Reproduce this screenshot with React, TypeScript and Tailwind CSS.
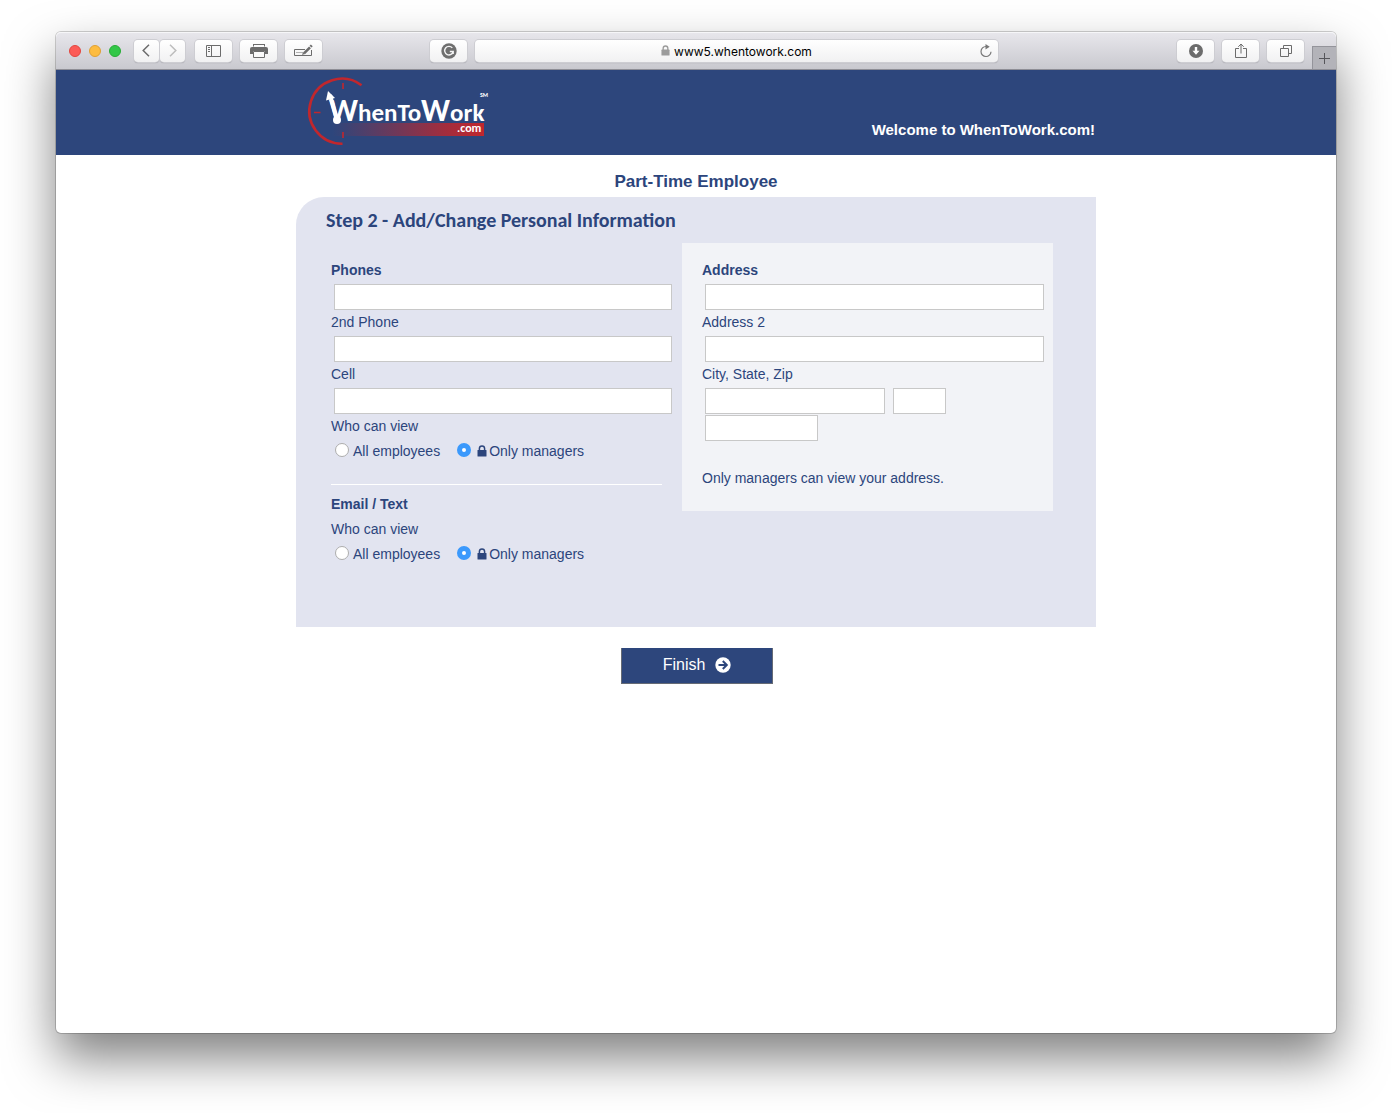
import type { ReactNode } from "react";

function ToolbarButton({ label, children, className = "w-[37px]" }: { label: string; children: ReactNode; className?: string }) {
  return (
    <button
      type="button"
      aria-label={label}
      className={`flex h-[22px] shrink-0 items-center justify-center rounded bg-linear-to-b from-white to-[#f1f1f2] text-[#6c6c6c] shadow-[0_0_0_1px_#cdcdd2,0_1px_1px_#8d8d93] ${className}`}
    >
      {children}
    </button>
  );
}

function LockIcon({ className }: { className: string }) {
  return (
    <svg viewBox="0 0 10 12" className={className} aria-hidden="true">
      <path d="M2.4 5.5V3.6a2.6 2.6 0 0 1 5.2 0v1.9" fill="none" stroke="currentColor" strokeWidth="1.5" />
      <rect x="0.5" y="5" width="9" height="6.5" rx="0.6" fill="currentColor" />
    </svg>
  );
}

function BrowserToolbar() {
  return (
    <div className="flex h-[38px] items-stretch rounded-t-[5px] border-b border-[#8e8e96] bg-linear-to-b from-[#e8e7ec] to-[#c9c9cf] shadow-[inset_0_1px_0_#f6f6f8]">
      <div className="flex min-w-0 flex-1 items-center pl-[13px]">
        <div className="flex shrink-0 gap-2">
          <span className="size-3 rounded-full border border-[#e2463f] bg-[#fc5b57]" />
          <span className="size-3 rounded-full border border-[#e0a033] bg-[#fdbc40]" />
          <span className="size-3 rounded-full border border-[#27ac35] bg-[#33c748]" />
        </div>
        <div className="ml-[13px] flex shrink-0 gap-px">
          <ToolbarButton label="Back" className="w-[25px] pr-0.5">
            <svg width="8" height="13" viewBox="0 0 8 13" fill="none" stroke="#6c6c6c" strokeWidth="1.5">
              <path d="M7 0.8 1.2 6.5 7 12.2" />
            </svg>
          </ToolbarButton>
          <ToolbarButton label="Forward" className="w-[25px]">
            <svg width="8" height="13" viewBox="0 0 8 13" fill="none" stroke="#bdbdbd" strokeWidth="1.5">
              <path d="m1 0.8 5.8 5.7L1 12.2" />
            </svg>
          </ToolbarButton>
        </div>
        <div className="ml-[10px] flex shrink-0 gap-2">
          <ToolbarButton label="Show sidebar">
            <svg width="15" height="12" viewBox="0 0 15 12" fill="none" stroke="currentColor">
              <path d="M0.5 0.5h14v11H.5zM5.5 1v10M2 2.5h2M2 4.5h2M2 6.5h2" />
            </svg>
          </ToolbarButton>
          <ToolbarButton label="Print">
            <svg width="18" height="14" viewBox="0 0 18 14">
              <path d="M3 0h12v2.500h-1V1H4v1.500H3z" fill="currentColor" />
              <path d="M2 3h14a2 2 0 0 1 2 2v5h-3V7H3v3H0V5a2 2 0 0 1 2-2z" fill="currentColor" />
              <path d="M3.500 7.500h11v6h-11z" fill="#fafafa" stroke="currentColor" />
            </svg>
          </ToolbarButton>
          <ToolbarButton label="Autofill">
            <svg width="19" height="13" viewBox="0 0 19 13" fill="none" stroke="currentColor">
              <path d="M11 5.500H.5v6h17V6" />
              <path d="M2.500 8.500H9" strokeDasharray="1 1" />
              <path d="m10 9.300 6-6" strokeWidth="2.600" />
              <path d="m16.500 2.700 1.300-1.300" strokeWidth="2.600" />
              <path d="m8 11 1-2.800 1.800 1.800z" fill="currentColor" stroke="none" />
            </svg>
          </ToolbarButton>
        </div>
        <div className="flex-1" />
      </div>
      <div className="flex w-[568px] min-w-0 items-center gap-2">
        <ToolbarButton label="Grammar check">
          <svg width="16" height="16" viewBox="0 0 16 16">
            <circle cx="8" cy="8" r="7.700" fill="#6f6f6f" />
            <path d="M11.300 4.900A4.300 4.300 0 1 0 12.200 8.500H8.800M12.200 8.300V11" fill="none" stroke="#f4f4f4" strokeWidth="1.400" />
          </svg>
        </ToolbarButton>
        <div className="flex h-[22px] min-w-0 flex-1 items-center rounded bg-linear-to-b from-white to-[#f1f1f2] pr-[6px] pl-[18px] shadow-[0_0_0_1px_#cdcdd2,0_1px_1px_#8d8d93]">
          <div className="flex flex-1 items-center justify-center gap-1 text-[12px] text-black">
            <LockIcon className="h-[11px] w-[9px] text-[#9b9b9b]" />
            <span className="pt-0.5 font-['Inter',sans-serif]">www5.whentowork.com</span>
          </div>
          <button type="button" aria-label="Reload">
            <svg width="12" height="14" viewBox="0 0 12 14">
              <path d="M6 2.500a5 5 0 1 0 5 5.200" fill="none" stroke="#777" strokeWidth="1.200" />
              <path d="M5.500 0 9.700 2.700 5.500 5.500z" fill="#777" />
            </svg>
          </button>
        </div>
      </div>
      <div className="flex min-w-0 flex-[0_1_338px] items-center justify-end">
        <div className="flex gap-2">
          <ToolbarButton label="Downloads">
            <svg width="14" height="14" viewBox="0 0 14 14">
              <circle cx="7" cy="7" r="7" fill="#6c6c6c" />
              <path d="M5.800 3h2.400v3.700h2.300L7 10.700 3.500 6.700h2.300z" fill="#fff" />
            </svg>
          </ToolbarButton>
          <ToolbarButton label="Share">
            <svg width="12" height="16" viewBox="0 0 12 16" fill="none" stroke="currentColor">
              <path d="M4 5.500H.5v9h11v-9H8M6 10.500V1M3.300 3.800 6 1l2.700 2.800" />
            </svg>
          </ToolbarButton>
          <ToolbarButton label="Show tabs">
            <svg width="12" height="12" viewBox="0 0 12 12" fill="none" stroke="currentColor">
              <path d="M.5 3.500h8v8h-8zM3.500 3V.5h8v8H9" />
            </svg>
          </ToolbarButton>
        </div>
        <button type="button" aria-label="New tab" className="ml-2 flex h-[23px] w-6 shrink-0 items-center justify-center self-end border-t border-l border-[#94949b] bg-[#b3b3b9] text-[#55555a]">
          <svg width="11" height="11" viewBox="0 0 11 11" stroke="currentColor">
            <path d="M5.500 0v11M0 5.500h11" />
          </svg>
        </button>
      </div>
    </div>
  );
}

function Logo() {
  return (
    <svg width="200" height="85" viewBox="0 0 200 85" role="img" aria-label="WhenToWork.com" className="shrink-0">
      <defs>
        <linearGradient id="bar" x1="0" x2="1">
          <stop offset="0" stopColor="#b02a36" stopOpacity="0" />
          <stop offset="0.75" stopColor="#b02a36" stopOpacity="0.9" />
          <stop offset="1" stopColor="#c1272d" />
        </linearGradient>
      </defs>
      <rect x="36" y="53" width="152" height="13" fill="url(#bar)" />
      <path d="M65.500 15.300A32.500 32.500 0 1 0 46.500 73.700" fill="none" stroke="#c1272d" strokeWidth="2.600" />
      <path d="M47 13v6M18 42.500h6.500M47 62v6" stroke="#c1272d" strokeWidth="1.600" />
      <g fill="#fff" fontFamily="Carlito, Lato, sans-serif" fontWeight="700">
        <text x="33" y="51" fontSize="25">
          <tspan fontSize="32">W</tspan>hen<tspan>To</tspan>
          <tspan fontSize="32">W</tspan>ork
        </text>
        <text x="161" y="62" fontSize="12">.com</text>
        <text x="184" y="27" fontSize="6">SM</text>
      </g>
      <path d="M41 50 34 25" stroke="#fff" strokeWidth="4" />
      <path d="M32 21 39 28 30 30.500z" fill="#fff" />
      <circle cx="41" cy="50" r="4" fill="#fff" />
    </svg>
  );
}

function Field({ id, label, bold = false }: { id: string; label: string; bold?: boolean }) {
  return (
    <div>
      <label htmlFor={id} className={`block h-[26px] leading-6 ${bold ? "font-bold" : ""}`}>
        {label}
      </label>
      <input id={id} type="text" className="ml-[3px] block h-[26px] w-[calc(100%-3px)] border border-[#c8c8c8] bg-white px-1" />
    </div>
  );
}

function Radio({ name, value, defaultChecked = false, children }: { name: string; value: string; defaultChecked?: boolean; children: ReactNode }) {
  return (
    <label className="flex items-center">
      <input
        type="radio"
        name={name}
        value={value}
        defaultChecked={defaultChecked}
        className="mb-0.5 size-[14px] appearance-none rounded-full border border-[#adadad] bg-white checked:border-[5px] checked:border-[#3b99fc]"
      />
      {children}
    </label>
  );
}

function Visibility({ name }: { name: string }) {
  return (
    <fieldset>
      <legend className="block leading-6">Who can view</legend>
      <div className="flex h-[26px] items-center gap-[17px] pl-1">
        <Radio name={name} value="all">
          <span className="ml-1">All employees</span>
        </Radio>
        <Radio name={name} value="managers" defaultChecked>
          <LockIcon className="mr-0.5 ml-1.5 h-3 w-2.5" />
          <span>Only managers</span>
        </Radio>
      </div>
    </fieldset>
  );
}

const smallField = "h-[26px] border border-[#c8c8c8] bg-white px-1";

export default function App() {
  return (
    <div className="flex min-h-screen flex-col bg-white px-14 pt-8 pb-20 font-['Liberation_Sans',Arial,sans-serif] text-sm text-[#2c457c]">
      <div className="flex flex-1 flex-col rounded-[5px] bg-white shadow-[0_0_0_1px_rgba(0,0,0,0.18),0_25px_50px_rgba(0,0,0,0.5)]">
        <BrowserToolbar />
        <header className="bg-[#2d467c]">
          <div className="mx-auto flex w-full max-w-[800px] items-end justify-between">
            <Logo />
            <p className="pr-px pb-4 text-[15px] leading-[18px] font-bold text-white">Welcome to WhenToWork.com!</p>
          </div>
        </header>
        <form className="mx-auto w-full max-w-[800px]">
          <h1 className="pt-4 pb-1 text-center text-[17px] leading-[22px] font-bold">Part-Time Employee</h1>
          <section className="rounded-tl-[28px] bg-[#e2e4f0] pb-[60px]">
            <h2 className="h-[46px] pt-[11px] pl-[30px] font-['Carlito','Lato',sans-serif] text-[20px] leading-6 font-bold">
              Step 2 - Add/Change Personal Information
            </h2>
            <div className="grid grid-cols-[minmax(0,351fr)_minmax(0,371fr)] items-start pr-[43px] pl-[35px]">
              <div className="pt-[15px] pr-[10px]">
                <Field id="phone" label="Phones" bold />
                <Field id="phone2" label="2nd Phone" />
                <Field id="cell" label="Cell" />
                <Visibility name="phone-view" />
                <hr className="mt-5 mr-[10px] border-white" />
                <h3 className="mt-[7px] mb-px leading-6 font-bold">Email / Text</h3>
                <Visibility name="email-view" />
              </div>
              <div className="bg-[#f2f3f7] pt-[15px] pr-[9px] pb-[21px] pl-5">
                <Field id="address" label="Address" bold />
                <Field id="address2" label="Address 2" />
                <label htmlFor="city" className="block h-[26px] leading-6">
                  City, State, Zip
                </label>
                <div className="ml-[3px] flex gap-2">
                  <input id="city" type="text" className={`w-[180px] ${smallField}`} />
                  <input type="text" aria-label="State" className={`w-[53px] ${smallField}`} />
                </div>
                <input type="text" aria-label="Zip" className={`mt-px ml-[3px] block w-[113px] ${smallField}`} />
                <p className="mt-[25px] leading-6">Only managers can view your address.</p>
              </div>
            </div>
          </section>
          <div className="flex justify-center pt-[21px] pl-0.5">
            <button type="button" className="flex h-9 w-[152px] items-center justify-center gap-[10px] border border-t-0 border-[#666b75] bg-[#2d467c] pb-0.5 text-base text-white">
              Finish
              <svg width="16" height="16" viewBox="0 0 16 16" aria-hidden="true">
                <circle cx="8" cy="8" r="7.700" fill="#fff" />
                <path d="M3.500 8h8M7.800 4l4 4-4 4" fill="none" stroke="#2d467c" strokeWidth="2" />
              </svg>
            </button>
          </div>
        </form>
      </div>
    </div>
  );
}
